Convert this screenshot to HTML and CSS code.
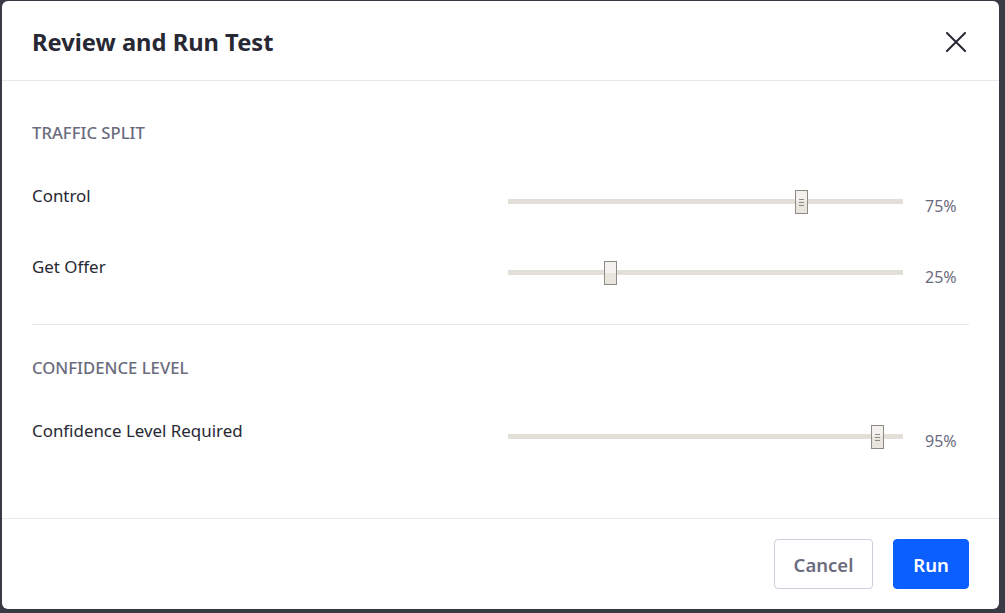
FILE: index.html
```html
<!DOCTYPE html>
<html lang="en">
<head>
<meta charset="utf-8">
<title>Review and Run Test</title>
<link rel="stylesheet" href="styles.css">
</head>
<body>
<div class="modal" role="dialog" aria-labelledby="modal-title">
  <header class="modal-header">
    <h1 id="modal-title" class="modal-title">Review and Run Test</h1>
    <button class="close-btn" aria-label="Close">
      <svg viewBox="0 0 20 20" width="20" height="20"><path d="M1 1 L19 19 M19 1 L1 19" stroke="#272833" stroke-width="2" stroke-linecap="round" fill="none"/></svg>
    </button>
  </header>
  <main class="modal-body">
    <section class="section section-first">
      <h2 class="section-title">TRAFFIC SPLIT</h2>
      <div class="rows">
        <div class="row">
          <span class="row-label">Control</span>
          <div class="slider"><div class="track"></div><div class="thumb" style="--v:0.75"></div></div>
          <span class="row-value">75%</span>
        </div>
        <div class="row">
          <span class="row-label">Get Offer</span>
          <div class="slider"><div class="track"></div><div class="thumb thumb-plain" style="--v:0.25"></div></div>
          <span class="row-value">25%</span>
        </div>
      </div>
    </section>
    <section class="section section-second">
      <h2 class="section-title">CONFIDENCE LEVEL</h2>
      <div class="rows">
        <div class="row">
          <span class="row-label">Confidence Level Required</span>
          <div class="slider"><div class="track"></div><div class="thumb" style="--v:0.95"></div></div>
          <span class="row-value">95%</span>
        </div>
      </div>
    </section>
  </main>
  <footer class="modal-footer">
    <button class="btn btn-secondary">Cancel</button>
    <button class="btn btn-primary">Run</button>
  </footer>
</div>
</body>
</html>
```
FILE: styles.css
```css
* { box-sizing: border-box; }
html, body { margin: 0; }
body {
  background: #3a3a45;
  font-family: "Noto Sans", "Open Sans", sans-serif;
  color: #272833;
  padding: 1px 6px 4px 2px;
  height: 613px;
  overflow: hidden;
}
.modal {
  width: 997px;
  height: 608px;
  background: #fff;
  border-radius: 6px;
  display: flex;
  flex-direction: column;
}
.modal-header {
  height: 80px;
  border-bottom: 1px solid #e7e7ed;
  display: flex;
  align-items: center;
  justify-content: space-between;
  padding: 2px 30px 0 30px;
}
.modal-title {
  margin: 0;
  font-size: 23.7px;
  font-weight: 700;
  line-height: 30px;
}
.close-btn {
  border: 0;
  background: none;
  padding: 0;
  margin-right: 3px;
  width: 20px;
  height: 20px;
  display: flex;
}
.modal-body {
  flex: 1;
  padding: 0 30px;
}
.section-first { padding: 40px 0 22px; border-bottom: 1px solid #e7e7ed; }
.section-second { padding: 31px 0 0; }
.section-title {
  margin: 0 0 39px;
  font-size: 16.7px;
  line-height: 24px;
  font-weight: 500;
  color: #6b6c7e;
}
.rows { display: flex; flex-direction: column; gap: 24px; }
.row {
  display: grid;
  grid-template-columns: 476px 395px 1fr;
  align-items: start;
  min-height: 47px;
}
.row-label { font-size: 16.9px; line-height: 24px; }
.row-value {
  font-size: 16px;
  line-height: 24px;
  color: #6b6c7e;
  padding: 10px 0 0 22px;
}
.slider {
  position: relative;
  height: 24px;
  margin-top: 6px;
  display: flex;
  align-items: center;
}
.track {
  width: 100%;
  height: 5px;
  background: #e2ded8;
  margin-top: -2px;
}
.thumb {
  position: absolute;
  top: 0;
  left: calc((100% - 13px) * var(--v));
  width: 13px;
  height: 24px;
  border: 1px solid #8e8a84;
  background:
    linear-gradient(#8e8a84, #8e8a84) center 8px / 5px 1px no-repeat,
    linear-gradient(#8e8a84, #8e8a84) center 11px / 5px 1px no-repeat,
    linear-gradient(#8e8a84, #8e8a84) center 14px / 5px 1px no-repeat,
    linear-gradient(#f3f1ee 0 45%, #e8e4de 45% 100%);
}
.thumb-plain { background: linear-gradient(#f4f2ef 0 50%, #e8e4de 50% 100%); }
.modal-footer {
  height: 91px;
  border-top: 1px solid #e7e7ed;
  display: flex;
  justify-content: flex-end;
  align-items: flex-start;
  gap: 20px;
  padding: 20px 30px 0;
}
.btn {
  height: 50px;
  border-radius: 4px;
  font-family: inherit;
  font-size: 18.5px;
  font-weight: 600;
  padding: 0;
}
.btn-secondary {
  width: 99px;
  background: #fff;
  border: 1px solid #cdced9;
  color: #6b6c7e;
}
.btn-primary {
  width: 76px;
  background: #0b5fff;
  border: 1px solid #0b5fff;
  color: #fff;
}
```
